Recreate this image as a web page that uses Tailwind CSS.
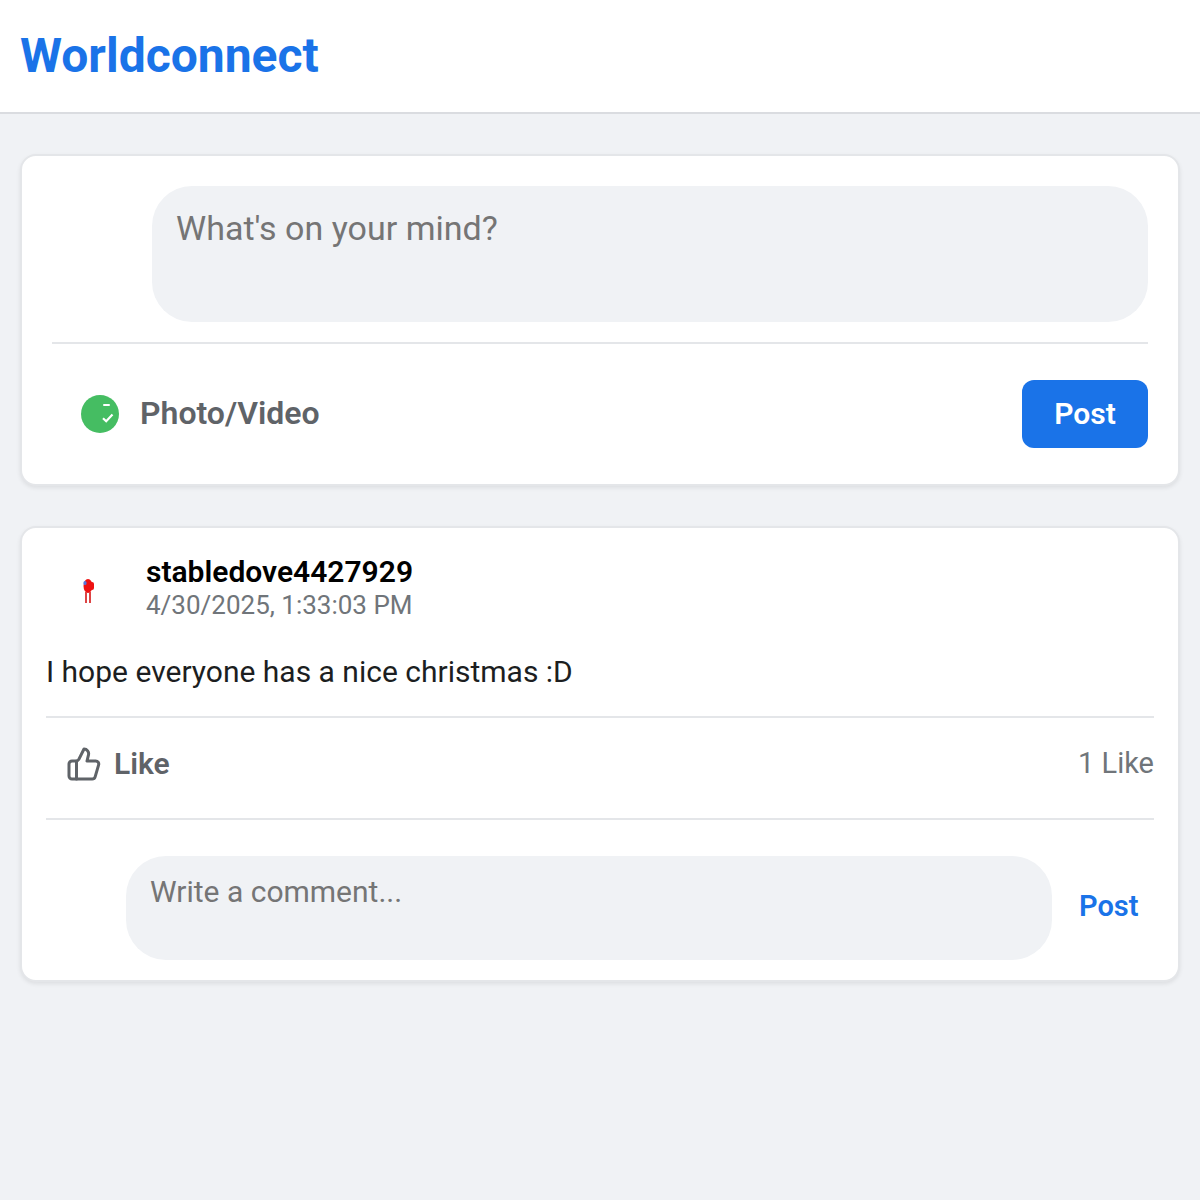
<!DOCTYPE html>
<html lang="en">
<head>
    <meta charset="UTF-8">
    <meta name="viewport" content="width=device-width, initial-scale=1.0">
    <script src="https://cdn.jsdelivr.net/npm/@tailwindcss/browser@4"></script>
    <title>Worldconnect</title>
</head>
<body class="bg-[#f0f2f5] font-['Roboto',sans-serif] min-h-[1200px]">
<header class="bg-white h-[114px] border-b-2 border-[#dadce0] px-5 flex items-center">
    <h1 class="text-[48px] leading-[56px] font-bold text-[#1a73e8]">Worldconnect</h1>
</header>
<main class="px-5 pt-10">
    <section class="bg-white rounded-2xl border-2 border-[#e4e6e9] shadow-[0_2px_4px_rgba(0,0,0,0.08)] h-[332px] px-[30px] pt-[30px]">
        <div class="pl-[100px]">
            <div class="bg-[#f0f2f5] rounded-[40px] h-[136px] px-6 py-[22px] text-[34px] leading-[40px] text-[#757575]">What's on your mind?</div>
        </div>
        <div class="mt-5 border-t-2 border-[#e4e6e9] pt-9 flex items-center justify-between">
            <div class="flex items-center gap-[20px] pl-[28px]">
                <svg class="w-10 h-10" viewBox="0 0 40 40">
                    <circle cx="20" cy="20" r="19" fill="#45bd62"/>
                    <rect x="23" y="10" width="7" height="2" rx="1" fill="#fff"/>
                    <path d="M23 24.2l3.2 3 6.3-6.6" fill="none" stroke="#fff" stroke-width="2.2"/>
                </svg>
                <span class="text-[32px] leading-[38px] font-semibold text-[#5f6368] -mt-[2px]">Photo/Video</span>
            </div>
            <button class="bg-[#1a73e8] text-white rounded-xl w-[126px] h-[68px] text-[30px] leading-[36px] font-semibold">Post</button>
        </div>
    </section>
    <section class="mt-10 bg-white rounded-2xl border-2 border-[#e4e6e9] shadow-[0_2px_4px_rgba(0,0,0,0.08)] h-[456px] px-6 pt-6">
        <div class="flex">
            <div class="w-[100px] h-[80px] relative shrink-0">
                <svg class="absolute left-[36px] top-[26px] w-[14px] h-[26px]" viewBox="0 0 14 26">
                    <ellipse cx="6" cy="8" rx="4.5" ry="7" fill="#ee1111"/>
                    <rect x="8" y="4" width="4" height="8" rx="2" fill="#ee1111"/>
                    <rect x="3" y="14" width="2" height="11" fill="#dd4444"/>
                    <rect x="7" y="14" width="2" height="11" fill="#dd4444"/>
                    <rect x="1.5" y="3" width="3" height="4" rx="1.5" fill="#5577dd"/>
                </svg>
            </div>
            <div>
                <div class="text-[30px] leading-[36px] font-semibold text-black mt-[2px]">stabledove4427929</div>
                <div class="text-[26px] leading-[32px] text-[#70757a] -mt-[1px]">4/30/2025, 1:33:03 PM</div>
            </div>
        </div>
        <p class="mt-[22px] text-[30px] leading-[36px] text-[#1c1e21]">I hope everyone has a nice christmas :D</p>
        <div class="mt-[26px] border-t-2 border-[#e4e6e9] h-[102px] pb-2 flex items-center justify-between">
            <div class="flex items-center gap-[12px] pl-5">
                <svg class="w-9 h-9" viewBox="0 0 24 24" fill="none" stroke="#5f6368" stroke-width="2" stroke-linecap="round" stroke-linejoin="round">
                    <path d="M7 10v12"/>
                    <path d="M15 5.88 14 10h5.83a2 2 0 0 1 1.92 2.56l-2.33 8A2 2 0 0 1 17.5 22H4a2 2 0 0 1-2-2v-8a2 2 0 0 1 2-2h2.76a2 2 0 0 0 1.79-1.11L12 2a3.13 3.13 0 0 1 3 3.88Z"/>
                </svg>
                <span class="text-[30px] leading-[36px] font-semibold text-[#5f6368]">Like</span>
            </div>
            <span class="text-[29px] leading-[34px] text-[#70757a] -mt-[2px]">1 Like</span>
        </div>
        <div class="border-t-2 border-[#e4e6e9] pt-9 flex items-center">
            <div class="pl-[80px] flex-1">
                <div class="bg-[#f0f2f5] rounded-[40px] h-[104px] px-6 py-[18px] text-[30px] leading-[36px] text-[#757575]">Write a comment...</div>
            </div>
            <button class="w-[102px] pl-[27px] pb-[4px] text-left text-[#1a73e8] text-[29px] leading-[34px] font-semibold whitespace-nowrap">Post</button>
        </div>
    </section>
</main>
</body>
</html>
